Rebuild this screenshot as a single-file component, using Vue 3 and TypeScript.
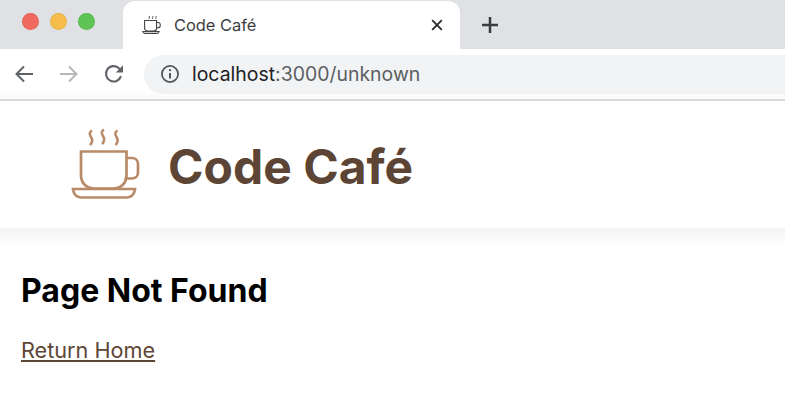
<script setup lang="ts">
const title = 'Code Café'
</script>

<template>
  <div class="page">
    <div class="tabstrip">
      <div class="lights">
        <span class="light red"></span>
        <span class="light yellow"></span>
        <span class="light green"></span>
      </div>
      <div class="tab">
        <svg class="favicon" width="20" height="20" viewBox="0 0 20 20" fill="none" stroke="#444" stroke-width="1.1">
          <path d="M7.300 4c-1-1 .8-1.600 0-3M10.700 4c-1-1 .8-1.600 0-3M14 4c-1-1 .8-1.600 0-3" stroke-width="0.9"/>
          <path d="M2.600 5.500h12v7.500c0 1.800-1.200 3-3 3h-6c-1.800 0-3-1.200-3-3z"/>
          <path d="M14.600 7.500h1.400c1.200 0 2.200.8 2.200 2v1.200c0 1.200-1 2-2.200 2h-1.600"/>
          <path d="M.8 16.500h16.400c-.2 1.300-1 2-2.200 2H3c-1.200 0-2-.7-2.200-2z" fill="#8a8a8a" fill-opacity=".4"/>
        </svg>
        <span class="tab-title">{{ title }}</span>
        <svg class="close" width="12" height="12" viewBox="0 0 12 12" stroke="#2c2d30" stroke-width="1.9" fill="none">
          <path d="M1.200 1.200l9.600 9.600M10.800 1.200l-9.600 9.600"/>
        </svg>
      </div>
      <svg class="plus" width="18" height="18" viewBox="0 0 18 18" stroke="#3a3b3e" stroke-width="2.500" fill="none">
        <path d="M9 1v16M1 9h16"/>
      </svg>
    </div>

    <div class="toolbar">
      <svg class="nav back" width="20" height="18" viewBox="0 0 20 18" fill="none" stroke="#5f6368" stroke-width="2">
        <path d="M19 9H2.500M10 1.500L2.500 9l7.500 7.500"/>
      </svg>
      <svg class="nav forward" width="20" height="18" viewBox="0 0 20 18" fill="none" stroke="#b4b6b9" stroke-width="2">
        <path d="M1 9h16.500M10 1.500L17.500 9 10 16.500"/>
      </svg>
      <svg class="nav reload" width="20" height="20" viewBox="0 0 20 20" fill="none" stroke="#5f6368" stroke-width="2.100">
        <path d="M17 12.200A7.700 7.700 0 1 1 15.200 4.400L18 7"/>
        <path d="M19 1.200v7.200h-7.200z" fill="#5f6368" stroke="none"/>
      </svg>
      <div class="omnibox">
        <svg class="info" width="20" height="20" viewBox="0 0 20 20" fill="none" stroke="#55585c" stroke-width="1.800">
          <circle cx="10" cy="10" r="8.100"/>
          <path d="M10 9v5.400" stroke-width="2"/>
          <circle cx="10" cy="6.200" r="1.150" fill="#55585c" stroke="none"/>
        </svg>
        <span class="url"><span class="host">localhost</span>:3000/unknown</span>
      </div>
    </div>

    <header class="site-header">
      <svg class="logo" width="70" height="74" viewBox="0 0 70 74" fill="none" stroke="#b98a68" stroke-width="2.700">
        <path d="M21 2.500c-2.500 1.500-3 3.500-1 6.500s1.500 5.500-1 8M33 1.500c-2.500 1.500-3 3.500-1 6.500s1.500 5.500-1 8M46.500 2.500c-2.500 1.500-3 3.500-1 6.500s1.500 5.500-1 8" stroke-width="2.500"/>
        <path d="M10 23.500h45.500v24c0 7.500-5.500 13-13 13H23c-7.500 0-13-5.500-13-13z"/>
        <path d="M55.500 30h5.500c3.500 0 6 2.500 6 6v8.500c0 3.500-2.500 6-6 6h-7.500"/>
        <path d="M2 61h62c-.5 5-3.500 8.500-8 8.500H10c-4.500 0-7.500-3.500-8-8.500z"/>
      </svg>
      <h1>{{ title }}</h1>
    </header>

    <main class="content">
      <h2>Page Not Found</h2>
      <a href="#" class="home">Return Home</a>
    </main>
  </div>
</template>

<style scoped>
.page {
  width: 785px;
  height: 408px;
  overflow: hidden;
  background: #fff;
  font-family: Inter, "Liberation Sans", sans-serif;
}
.tabstrip {
  height: 49px;
  background: #dfe1e5;
  display: flex;
  align-items: flex-end;
}
.lights {
  width: 123px;
  height: 49px;
  padding: 13px 0 0 22px;
  box-sizing: border-box;
  display: flex;
  gap: 11px;
}
.light {
  width: 17px;
  height: 17px;
  border-radius: 50%;
  box-sizing: border-box;
  border: 1px solid rgba(0, 0, 0, 0.06);
}
.red { background: #f2695f; }
.yellow { background: #f7bd4b; }
.green { background: #5ec454; }
.tab {
  width: 337px;
  height: 48px;
  background: #fff;
  border-radius: 12px 12px 0 0;
  display: flex;
  align-items: center;
  padding: 0 17px 0 19px;
  box-sizing: border-box;
}
.favicon { margin-right: 12px; }
.tab-title {
  flex: 1;
  font-size: 16.400px;
  color: #3c3d40;
}
.plus { margin: 0 0 15px 21px; }
.toolbar {
  height: 50px;
  background: #fff;
  border-bottom: 2px solid #dfe0e2;
  display: flex;
  align-items: center;
  padding-left: 14px;
}
.nav { flex: none; }
.forward { margin-left: 25px; }
.reload { margin-left: 25px; }
.omnibox {
  margin-left: 20px;
  flex: 1;
  height: 39px;
  background: #f1f3f4;
  border-radius: 20px 0 0 20px;
  display: flex;
  align-items: center;
  padding-left: 16px;
}
.url {
  margin-left: 12px;
  font-size: 19.450px;
  color: #5c5f63;
}
.host { color: #202124; }
.site-header {
  height: 127px;
  margin: 0 -40px;
  display: flex;
  align-items: center;
  padding-left: 111px;
  background: #fff;
  box-shadow: 0 4px 20px rgba(0, 0, 0, 0.08);
  position: relative;
}
.logo { margin-right: 27px; flex: none; }
h1 {
  margin: 0;
  padding-top: 3px;
  font-size: 48px;
  font-weight: 700;
  color: #5d4535;
}
.content { padding: 44px 21px 0; }
h2 {
  margin: 0 0 27px;
  font-size: 32px;
  line-height: 38px;
  font-weight: 700;
  color: #000;
}
.home {
  font-size: 21.650px;
  color: #5e4636;
  text-decoration: underline;
}
</style>
